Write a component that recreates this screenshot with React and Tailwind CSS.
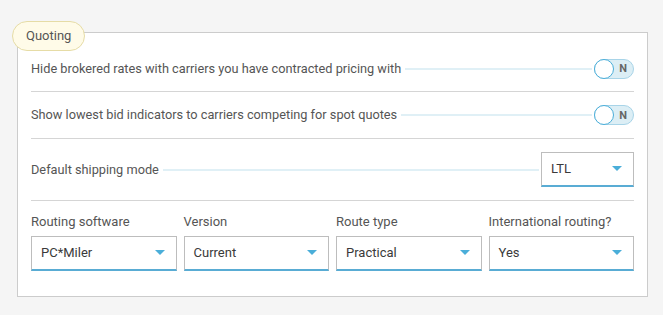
import React from "react";

const Toggle = () => (
    <div className="relative flex items-center w-[40px] h-[20px] rounded-full bg-[#dceef5] border border-[#a8d4e8] shrink-0">
        <div className="absolute left-[-1px] top-[-1px] w-[20px] h-[20px] rounded-full bg-white border-[1.5px] border-[#4aaed9]" />
        <span className="ml-auto mr-[6px] text-[11px] font-bold text-[#666] leading-none">N</span>
    </div>
);

const Leader = () => <div className="flex-1 h-[2px] bg-[#e0f0f6] ml-[4px] mr-[2px]" />;

const Select = ({ value, className = "" }) => (
    <div
        className={`flex items-center h-[35px] px-[9px] bg-white border border-[#bdbdbd] border-b-[2px] border-b-[#59acd4] text-[13px] text-[#3a3a3a] ${className}`}
    >
        <span className="flex-1">{value}</span>
        <svg width="10" height="6" viewBox="0 0 10 6" className="mr-[2px]">
            <path d="M0 0 L10 0 L5 5 Z" fill="#4aaed9" />
        </svg>
    </div>
);

export default function App() {
    return (
        <div
            className="min-h-screen bg-[#f5f5f5] pt-[32px] pl-[17px] pr-[15px]"
            style={{ fontFamily: "Roboto, 'Liberation Sans', sans-serif" }}
        >
            <div className="relative bg-white border border-[#cccccc] px-[13px] pt-[13px] pb-[25px]">
                {/* Badge */}
                <div className="absolute left-[-6px] top-[-12px] h-[30px] px-[13px] flex items-center rounded-full bg-[#fffbe8] border border-[#e6dca6] text-[13px] text-[#555]">
                    Quoting
                </div>

                {/* Toggle rows */}
                <div className="flex items-center h-[46px] border-b border-[#d5d5d5] text-[12.75px] text-[#555]">
                    <span>Hide brokered rates with carriers you have contracted pricing with</span>
                    <Leader />
                    <Toggle />
                </div>
                <div className="flex items-center h-[47px] border-b border-[#d5d5d5] text-[12.75px] text-[#555]">
                    <span>Show lowest bid indicators to carriers competing for spot quotes</span>
                    <Leader />
                    <Toggle />
                </div>

                {/* Shipping mode */}
                <div className="flex items-center h-[62px] border-b border-[#d5d5d5] text-[12.75px] text-[#555]">
                    <span>Default shipping mode</span>
                    <Leader />
                    <Select value="LTL" className="w-[93px]" />
                </div>

                {/* Routing */}
                <div className="grid grid-cols-4 gap-[7px] pt-[12px]">
                    {[
                        ["Routing software", "PC*Miler"],
                        ["Version", "Current"],
                        ["Route type", "Practical"],
                        ["International routing?", "Yes"],
                    ].map(([label, value]) => (
                        <div key={label}>
                            <div className="text-[13px] text-[#555] leading-[18px] mb-[5px]">{label}</div>
                            <Select value={value} />
                        </div>
                    ))}
                </div>
            </div>
        </div>
    );
}
